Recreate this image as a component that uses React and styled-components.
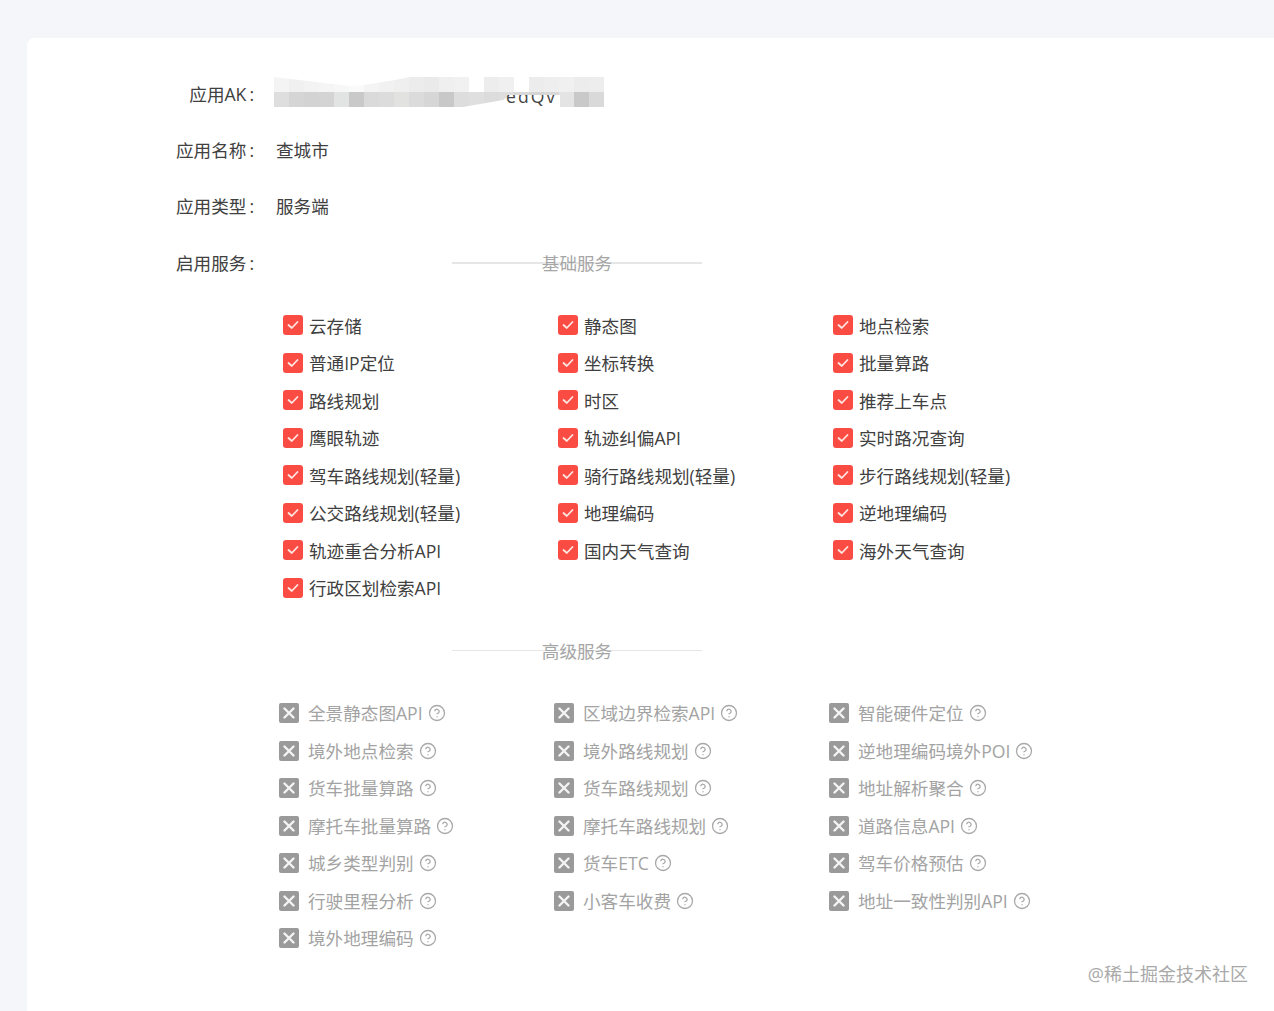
import styled, { createGlobalStyle } from "styled-components";
import { CircleHelp } from "lucide-react";

const GlobalStyle = createGlobalStyle`
    html, body {
        margin: 0;
        padding: 0;
        height: 100%;
        overflow: hidden;
        background: #f5f6f9;
        font-family: "Open Sans", "Noto Sans CJK SC", sans-serif;
    }
`;

const Page = styled.div`
    height: 1011px;
    padding: 38px 0 0 27px;
    box-sizing: border-box;
    position: relative;
    overflow: hidden;
`;

const Card = styled.div`
    height: 100%;
    background: #fff;
    border-radius: 8px 0 0 0;
    padding-top: 27.2px;
    box-sizing: border-box;
`;

const FormRow = styled.div`
    display: flex;
    align-items: center;
    height: 56.3px;
    font-size: 17.6px;
    color: #404040;
`;

const Label = styled.div`
    width: 227px;
    margin-right: 22px;
    text-align: right;
    white-space: nowrap;
    flex: none;
`;

const Colon = styled.span`
    margin-left: 3px;
`;

const Value = styled.div`
    white-space: nowrap;
`;

const Mosaic = styled.svg`
    display: block;
    margin: -3px 0 0 -2px;
`;

const ServiceBlock = styled.div`
    margin-left: 249px;
    margin-top: -28.3px;
`;

const Divider = styled.div`
    width: 250px;
    height: 1.5px;
    margin-left: 176px;
    background: #e6e6e6;
    display: flex;
    align-items: center;
    justify-content: center;
`;

const DividerTitle = styled.span`
    font-size: 17.6px;
    color: #a6a6a6;
    white-space: nowrap;
`;

const ServiceGrid = styled.div`
    display: grid;
    grid-template-columns: repeat(3, 275px);
    grid-auto-rows: 37.5px;
    padding-left: ${({ $inset }) => $inset}px;
    margin-top: 43px;
    margin-bottom: 43px;
`;

const Service = styled.div`
    display: flex;
    align-items: center;
    font-size: 17.6px;
    white-space: nowrap;
    color: ${({ $off }) => ($off ? "#a3a3a3" : "#404040")};
`;

const CheckBox = styled.span`
    width: 20px;
    height: 20px;
    margin-right: 6px;
    border-radius: 3px;
    background: #fb4c44;
    display: flex;
    align-items: center;
    justify-content: center;
    flex: none;
`;

const CrossBox = styled.span`
    width: 20px;
    height: 20px;
    margin: 1px 9px 0 0;
    border-radius: 2px;
    background: #9a9a9a;
    display: flex;
    align-items: center;
    justify-content: center;
    flex: none;
`;

const Help = styled(CircleHelp)`
    margin: 1px 0 0 5px;
    color: #a8a8a8;
    flex: none;
`;

const Watermark = styled.div`
    position: absolute;
    right: 26px;
    top: 960px;
    font-size: 18px;
    color: #a9a9a9;
    white-space: nowrap;
`;

const enabled = [
    "云存储", "静态图", "地点检索",
    "普通IP定位", "坐标转换", "批量算路",
    "路线规划", "时区", "推荐上车点",
    "鹰眼轨迹", "轨迹纠偏API", "实时路况查询",
    "驾车路线规划(轻量)", "骑行路线规划(轻量)", "步行路线规划(轻量)",
    "公交路线规划(轻量)", "地理编码", "逆地理编码",
    "轨迹重合分析API", "国内天气查询", "海外天气查询",
    "行政区划检索API",
];

const disabled = [
    "全景静态图API", "区域边界检索API", "智能硬件定位",
    "境外地点检索", "境外路线规划", "逆地理编码境外POI",
    "货车批量算路", "货车路线规划", "地址解析聚合",
    "摩托车批量算路", "摩托车路线规划", "道路信息API",
    "城乡类型判别", "货车ETC", "驾车价格预估",
    "行驶里程分析", "小客车收费", "地址一致性判别API",
    "境外地理编码",
];

const topShades = ["#f4f4f4", "#f0f0f0", "#f3f3f3", "#f5f5f5", "#f7f7f7", "#fafafa", "#f4f4f4", "#f1f1f1", "#efefef", "#ececec", "#eaeaea", "#efefef", "#f1f1f1", "#fff", "#ededed", "#f0f0f0", "#fff", "#ececec", "#eeeeee", "#f0f0f0", "#ececec", "#ededed"];
const lowShades = ["#dedede", "#d5d5d5", "#d3d3d3", "#d4d4d4", "#e2e4e3", "#c9c9c9", "#dadada", "#dcdcdc", "#e2e2e0", "#dbdbdb", "#d6d6d6", "#c8c8c8", "#dddddd", "#dfdfdf", "#dcdcdc", "#dedede", "#d8d8d8", "#d4d4d4", "#d8d8d8", "#e4e4e4", "#c9c9c9", "#d9d9d9"];

function BlurredKey() {
    return (
        <Mosaic width="330" height="30" viewBox="0 0 330 30">
            <clipPath id="keyClip">
                <rect x="0" y="18" width="330" height="12" />
            </clipPath>
            {topShades.map((shade, i) => (
                <rect key={`t${i}`} x={i * 15} y="0" width="15" height="15" fill={shade} />
            ))}
            {lowShades.map((shade, i) => (
                <rect key={`l${i}`} x={i * 15} y="15" width="15" height="15" fill={shade} />
            ))}
            <polygon points="0,0 76,9 90,8 121,3 136,0" fill="#fff" />
            <polygon points="189,30 229,23 236,18 286,18 286,30" fill="#fff" />
            <text
                x="232"
                y="26"
                clipPath="url(#keyClip)"
                fontFamily="Open Sans, sans-serif"
                fontSize="17.6"
                letterSpacing="2"
                fill="#444"
            >
                edQv
            </text>
        </Mosaic>
    );
}

function CheckMark() {
    return (
        <svg width="12" height="10" viewBox="0 0 12 10" fill="none">
            <path d="M1.5 5 L4.8 8 L10.5 2" stroke="#ffe4e0" strokeWidth="1.8" strokeLinecap="round" strokeLinejoin="round" />
        </svg>
    );
}

function CrossMark() {
    return (
        <svg width="12" height="12" viewBox="0 0 12 12" fill="none">
            <path d="M1.5 1.5 L10.5 10.5 M10.5 1.5 L1.5 10.5" stroke="#f4f4f4" strokeWidth="2.4" strokeLinecap="round" />
        </svg>
    );
}

export default function App() {
    return (
        <Page>
            <GlobalStyle />
            <Card>
                <FormRow>
                    <Label>应用AK<Colon>:</Colon></Label>
                    <Value><BlurredKey /></Value>
                </FormRow>
                <FormRow>
                    <Label>应用名称<Colon>:</Colon></Label>
                    <Value>查城市</Value>
                </FormRow>
                <FormRow>
                    <Label>应用类型<Colon>:</Colon></Label>
                    <Value>服务端</Value>
                </FormRow>
                <FormRow>
                    <Label>启用服务<Colon>:</Colon></Label>
                </FormRow>
                <ServiceBlock>
                    <Divider><DividerTitle>基础服务</DividerTitle></Divider>
                    <ServiceGrid $inset={7}>
                        {enabled.map((name) => (
                            <Service key={name}>
                                <CheckBox><CheckMark /></CheckBox>
                                {name}
                            </Service>
                        ))}
                    </ServiceGrid>
                    <Divider><DividerTitle>高级服务</DividerTitle></Divider>
                    <ServiceGrid $inset={3}>
                        {disabled.map((name) => (
                            <Service key={name} $off>
                                <CrossBox><CrossMark /></CrossBox>
                                {name}
                                <Help size={18} strokeWidth={1.7} />
                            </Service>
                        ))}
                    </ServiceGrid>
                </ServiceBlock>
            </Card>
            <Watermark>@稀土掘金技术社区</Watermark>
        </Page>
    );
}
